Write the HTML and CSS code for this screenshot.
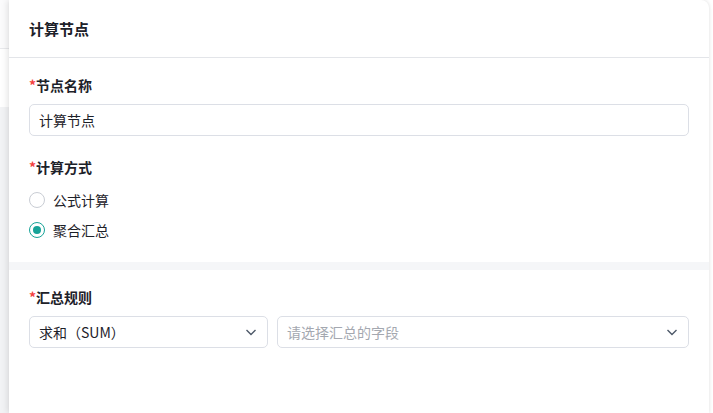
FILE: index.html
```html
<!DOCTYPE html>
<html lang="zh-CN">
<head>
<meta charset="utf-8">
<title>计算节点</title>
<link rel="stylesheet" href="styles.css">
</head>
<body>
<div class="page">
  <div class="backdrop">
    <div class="bd-top"></div>
    <div class="bd-mid"></div>
    <div class="bd-bottom"></div>
  </div>
  <aside class="drawer">
    <header class="drawer-header">计算节点</header>
    <section class="section">
      <div class="field">
        <label class="label"><span class="req">*</span>节点名称</label>
        <div class="input">计算节点</div>
      </div>
      <div class="field">
        <label class="label"><span class="req">*</span>计算方式</label>
        <div class="radios">
          <div class="radio"><span class="dot"></span><span>公式计算</span></div>
          <div class="radio checked"><span class="dot"></span><span>聚合汇总</span></div>
        </div>
      </div>
    </section>
    <div class="divider"></div>
    <section class="section">
      <div class="field">
        <label class="label"><span class="req">*</span>汇总规则</label>
        <div class="select-row">
          <div class="select sel-a"><span>求和（SUM）</span>
            <svg class="chev" viewBox="0 0 12 12" width="12" height="12"><path d="M1.5 4 L6 8.5 L10.5 4" fill="none" stroke="#4e5969" stroke-width="1.4"/></svg>
          </div>
          <div class="select sel-b"><span class="ph">请选择汇总的字段</span>
            <svg class="chev" viewBox="0 0 12 12" width="12" height="12"><path d="M1.5 4 L6 8.5 L10.5 4" fill="none" stroke="#4e5969" stroke-width="1.4"/></svg>
          </div>
        </div>
      </div>
    </section>
  </aside>
  <div class="edge"></div>
</div>
</body>
</html>
```

FILE: styles.css
```css
* { box-sizing: border-box; }
html, body { margin: 0; padding: 0; }
body {
  font-family: "Noto Sans CJK SC", "Noto Sans", sans-serif;
  color: #1d2129;
  background: #ffffff;
}
.page {
  display: flex;
  width: 713px;
  height: 413px;
  overflow: hidden;
}
.backdrop {
  flex: 0 0 9px;
  display: flex;
  flex-direction: column;
}
.bd-top { height: 49px; background: #fbfbfc; border-bottom: 1px solid #e8e9ec; }
.bd-mid { height: 58px; background: #ffffff; }
.bd-bottom { flex: 1; background: #f2f3f5; }
.drawer {
  flex: 0 0 700px;
  background: #ffffff;
  border-top-right-radius: 8px;
  box-shadow: -2px 0 6px rgba(0, 0, 0, 0.10), 1px 0 3px rgba(0, 0, 0, 0.06);
  display: flex;
  flex-direction: column;
  position: relative;
  z-index: 1;
}
.edge { flex: 1; background: #ffffff; }
.drawer-header {
  height: 58px;
  padding: 0 20px;
  display: flex;
  align-items: center;
  font-size: 15px;
  font-weight: 700;
  border-bottom: 1px solid #e3e5e9;
}
.section { padding: 17px 20px 17px; }
.field + .field { margin-top: 21px; }
.label {
  display: flex;
  align-items: center;
  height: 20px;
  font-size: 14px;
  font-weight: 700;
  color: #1d2129;
  margin-bottom: 9px;
}
.req { color: #f53f3f; font-weight: 700; font-size: 14px; margin-right: 0; }
.input, .select {
  height: 32px;
  border: 1px solid #dcdfe6;
  border-radius: 5px;
  padding: 0 9px;
  display: flex;
  align-items: center;
  font-size: 14px;
  color: #1d2129;
}
.radios { margin-top: -1px; }
.radio {
  height: 30px;
  display: flex;
  align-items: center;
  gap: 8px;
  font-size: 14px;
  color: #1d2129;
}
.dot {
  width: 16px;
  height: 16px;
  border: 1px solid #c9cdd4;
  border-radius: 50%;
  display: inline-flex;
  align-items: center;
  justify-content: center;
  flex: 0 0 16px;
}
.radio.checked .dot { border-color: #17a398; border-width: 1.5px; }
.radio.checked .dot::after {
  content: "";
  width: 8px;
  height: 8px;
  border-radius: 50%;
  background: #17a398;
}
.divider { height: 8px; background: #f5f6f8; }
.select-row { display: flex; gap: 9px; }
.select { justify-content: space-between; padding-right: 10px; }
.sel-a { flex: 0 0 239px; }
.sel-b { flex: 1; }
.ph { color: #a4a8b0; }
.chev { display: block; }
```
